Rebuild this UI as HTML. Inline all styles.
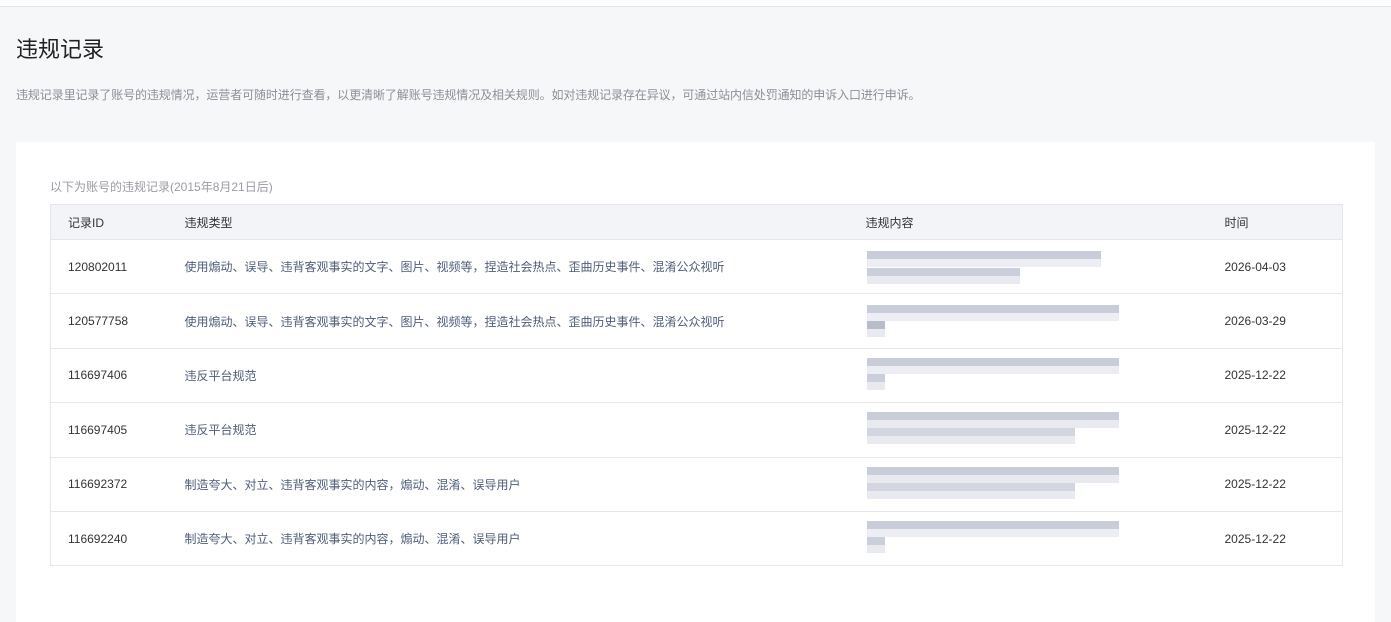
<!DOCTYPE html>
<html><head><meta charset="utf-8"><style>
body{margin:0;width:1391px;height:607px;background:#f6f7f9;font-family:"Liberation Sans","Noto Sans CJK SC",sans-serif;overflow:hidden;position:relative}
.top{position:absolute;left:0;top:0;width:1391px;height:6px;background:#fff;border-bottom:1px solid #e4e6eb}
h1{position:absolute;left:16px;top:32px;margin:0;font-size:22px;font-weight:normal;color:#222}
.desc{position:absolute;left:16px;top:86px;font-size:12px;color:#8c8f96;letter-spacing:-0.1px}
.card{position:absolute;left:16px;top:142px;width:1359px;height:480px;background:#fff}
.sub{position:absolute;left:50px;top:178px;font-size:12px;color:#9a9ca3}
table{position:absolute;left:50px;top:204px;width:1293px;border-collapse:collapse;font-size:12px;table-layout:fixed}
td,th{border-bottom:1px solid #e4e6eb;text-align:left;font-weight:normal;padding:0;box-sizing:border-box}
table{border:1px solid #e4e6eb}
th{background:#f3f4f7;height:35px;color:#333}
td{height:54.4px;color:#333}
td.t{color:#4f5d7a}
.c1{padding-left:17px;width:134px}.c2{width:681px}.c3{width:359px;position:relative}
.b{position:absolute;height:8px}
</style></head><body>
<div class="top"></div>
<h1>违规记录</h1>
<div class="desc">违规记录里记录了账号的违规情况，运营者可随时进行查看，以更清晰了解账号违规情况及相关规则。如对违规记录存在异议，可通过站内信处罚通知的申诉入口进行申诉。</div>
<div class="card"></div>
<div class="sub">以下为账号的违规记录(2015年8月21日后)</div>
<table>
<tr><th class="c1">记录ID</th><th class="c2">违规类型</th><th class="c3">违规内容</th><th>时间</th></tr>
<tr><td class="c1">120802011</td><td class="t">使用煽动、误导、违背客观事实的文字、图片、视频等，捏造社会热点、歪曲历史事件、混淆公众视听</td><td class="c3"><div class="b" style="left:1px;top:11px;width:234px;background:#c9cdda"></div><div class="b" style="left:1px;top:19px;width:234px;background:#eceef3"></div><div class="b" style="left:1px;top:28px;width:153px;background:#cbcfdb"></div><div class="b" style="left:1px;top:36px;width:153px;background:#e8eaf0"></div></td><td>2026-04-03</td></tr>
<tr><td class="c1">120577758</td><td class="t">使用煽动、误导、违背客观事实的文字、图片、视频等，捏造社会热点、歪曲历史事件、混淆公众视听</td><td class="c3"><div class="b" style="left:1px;top:11px;width:252px;background:#c9cdda"></div><div class="b" style="left:1px;top:19px;width:252px;background:#eceef3"></div><div class="b" style="left:1px;top:27px;width:18px;background:#b8bccb"></div><div class="b" style="left:1px;top:35px;width:18px;background:#e8eaf0"></div></td><td>2026-03-29</td></tr>
<tr><td class="c1">116697406</td><td class="t">违反平台规范</td><td class="c3"><div class="b" style="left:1px;top:9px;width:252px;background:#c9cdda"></div><div class="b" style="left:1px;top:17px;width:252px;background:#eceef3"></div><div class="b" style="left:1px;top:25px;width:18px;background:#cbcfdb"></div><div class="b" style="left:1px;top:33px;width:18px;background:#e8eaf0"></div></td><td>2025-12-22</td></tr>
<tr><td class="c1">116697405</td><td class="t">违反平台规范</td><td class="c3"><div class="b" style="left:1px;top:9px;width:252px;background:#c9cdda"></div><div class="b" style="left:1px;top:17px;width:252px;background:#e8eaf0"></div><div class="b" style="left:1px;top:25px;width:208px;background:#d3d6e0"></div><div class="b" style="left:1px;top:33px;width:208px;background:#e8eaf0"></div></td><td>2025-12-22</td></tr>
<tr><td class="c1">116692372</td><td class="t">制造夸大、对立、违背客观事实的内容，煽动、混淆、误导用户</td><td class="c3"><div class="b" style="left:1px;top:9px;width:252px;background:#c9cdda"></div><div class="b" style="left:1px;top:17px;width:252px;background:#e8eaf0"></div><div class="b" style="left:1px;top:25px;width:208px;background:#d3d6e0"></div><div class="b" style="left:1px;top:33px;width:208px;background:#e8eaf0"></div></td><td>2025-12-22</td></tr>
<tr><td class="c1">116692240</td><td class="t">制造夸大、对立、违背客观事实的内容，煽动、混淆、误导用户</td><td class="c3"><div class="b" style="left:1px;top:9px;width:252px;background:#c9cdda"></div><div class="b" style="left:1px;top:17px;width:252px;background:#eceef3"></div><div class="b" style="left:1px;top:25px;width:18px;background:#cbcfdb"></div><div class="b" style="left:1px;top:33px;width:18px;background:#e8eaf0"></div></td><td>2025-12-22</td></tr>
</table>
</body></html>
